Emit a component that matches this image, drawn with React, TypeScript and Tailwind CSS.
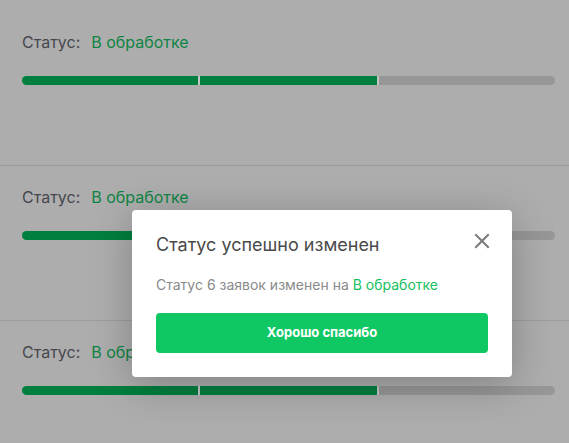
import React from "react";

function Bar() {
  return (
    <div className="flex h-[9px] w-full">
      <div className="h-full flex-1 rounded-l-full bg-[#007f3e]" />
      <div className="h-full w-[2px] bg-[#c4c4c4]" />
      <div className="h-full flex-1 bg-[#007f3e]" />
      <div className="h-full w-[2px] bg-[#c4c4c4]" />
      <div className="h-full flex-1 rounded-r-full bg-[#979797]" />
    </div>
  );
}

function Item({ first }: { first?: boolean }) {
  return (
    <div
      className={
        "border-b border-[#9c9c9c] pl-[22px] pr-[14px] pb-[80px] " +
        (first ? "pt-[32px]" : "pt-[21px]")
      }
    >
      <div className="flex h-[20px] items-center text-[16px] leading-[20px]">
        <span className="text-[#45474d]">Статус:</span>
        <span className="ml-[11px] text-[#0f8444]">В обработке</span>
      </div>
      <div className="mt-[24px]">
        <Bar />
      </div>
    </div>
  );
}

export default function App() {
  return (
    <div
      className="relative h-[443px] w-[569px] overflow-hidden bg-[#adadad]"
      style={{ fontFamily: "Inter, 'Noto Sans', sans-serif" }}
    >
      <div>
        <Item first />
        <Item />
        <Item />
      </div>

      <div className="absolute left-[132px] top-[210px] w-[380px] rounded-[4px] bg-white p-6 shadow-[0_8px_40px_rgba(0,0,0,0.25)]">
        <button className="absolute right-[22px] top-[23px] flex h-[16px] w-[16px] items-center justify-center">
          <svg width="16" height="16" viewBox="0 0 16 16" fill="none">
            <path d="M2 2L14 14M14 2L2 14" stroke="#7a7a7a" strokeWidth="2" strokeLinecap="square" />
          </svg>
        </button>
        <div className="text-[18px] leading-[22px] text-[#4a4a4a]">Статус успешно изменен</div>
        <div className="mt-[19px] text-[14px] leading-[20px] text-[#8a8a8a]">
          Статус 6 заявок изменен на <span className="text-[#16c05e]">В обработке</span>
        </div>
        <button className="mt-[18px] flex h-[40px] w-full items-center justify-center rounded-[4px] bg-[#0fc864] text-[13px] font-bold text-white">
          Хорошо спасибо
        </button>
      </div>
    </div>
  );
}
